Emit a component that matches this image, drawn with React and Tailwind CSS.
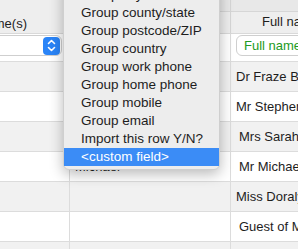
import { useState } from 'react';

const menuItems = [
  'Group city/town',
  'Group county/state',
  'Group postcode/ZIP',
  'Group country',
  'Group work phone',
  'Group home phone',
  'Group mobile',
  'Group email',
  'Import this row Y/N?',
  '<custom field>',
];

const rows = [
  { b: '', c: 'Dr Fraze Bamford', pad: false },
  { b: '', c: 'Mr Stephen Allan', pad: false },
  { b: '', c: 'Mrs Sarah Allan', pad: true },
  { b: 'Michael', c: 'Mr Michael Ames', pad: true },
  { b: '', c: 'Miss Doralynn Bell', pad: false },
  { b: '', c: 'Guest of Mr Bell', pad: true },
  { b: '', c: '', pad: false },
];

function Stepper() {
  return (
    <div className="flex h-[18px] w-[17px] items-center justify-center rounded-[4px] bg-[#2a84f7]">
      <svg width="9" height="13" viewBox="0 0 9 13" fill="none" stroke="white" strokeWidth="1.6" strokeLinecap="round" strokeLinejoin="round">
        <path d="M1.5 4.5 L4.5 1.5 L7.5 4.5" />
        <path d="M1.5 8.5 L4.5 11.5 L7.5 8.5" />
      </svg>
    </div>
  );
}

export default function App() {
  const [selected] = useState('<custom field>');

  return (
    <div className="relative h-[249px] w-[298px] overflow-hidden bg-white font-['Liberation_Sans',Arial,sans-serif] text-[13px] text-[#1d1d1d]">
      {/* Header row */}
      <div className="flex h-[34px] border-b border-[#d9d9d9] bg-[#eeeeee]">
        <div className="relative w-[69px] shrink-0 overflow-hidden">
          <span className="absolute right-[42px] top-[14px] whitespace-nowrap">First name(s)</span>
        </div>
        <div className="flex w-[161px] shrink-0 flex-col">
          <div className="h-[12px] border-b border-[#d6d6d6] bg-[#e8e8e8]" />
        </div>
        <div className="flex w-[120px] shrink-0 flex-col border-l border-[#d6d6d6]">
          <div className="h-[12px] border-b border-[#d6d6d6] bg-[#e8e8e8]" />
          <div className="flex flex-1 items-center justify-center pb-[2px]">Full name</div>
        </div>
      </div>

      {/* Select row */}
      <div className="flex h-[28px] border-b border-[#dcdcdc] bg-white">
        <div className="w-[69px] shrink-0 overflow-hidden pt-[1px]">
          <div className="ml-[-90px] flex h-[21px] w-[152px] items-center justify-between rounded-[6px] border border-[#cfcfcf] bg-white pl-[8px] pr-[1px]">
            <span className="text-[#239b23]">First name</span>
            <Stepper />
          </div>
        </div>
        <div className="w-[161px] shrink-0" />
        <div className="w-[126px] shrink-0 border-l border-[#dcdcdc] pl-[5px] pt-[1px]">
          <div className="flex h-[21px] items-center rounded-[6px] border border-[#cfcfcf] bg-white pl-[7px] text-[#239b23]">
            Full name
          </div>
        </div>
      </div>

      {/* Data rows */}
      {rows.map((row, i) => (
        <div
          key={i}
          className={`flex h-[30px] border-b border-[#dcdcdc] ${i % 2 === 0 ? 'bg-[#f1f1f1]' : 'bg-white'}`}
        >
          <div className="w-[69px] shrink-0" />
          <div className="flex w-[161px] shrink-0 items-center border-l border-[#dcdcdc] pl-[5px]">{row.b}</div>
          <div className={`flex w-[126px] shrink-0 items-center whitespace-nowrap border-l border-[#dcdcdc] ${row.pad ? 'pl-[8px]' : 'pl-[5px]'}`}>
            {row.c}
          </div>
        </div>
      ))}

      {/* Open dropdown menu */}
      <div className="absolute left-[63px] top-[-18px] w-[157px] rounded-[6px] border border-[#cfcfcf] bg-[#ededed] pb-[3px] pt-[3px] text-[13.5px] shadow-[0_4px_14px_rgba(0,0,0,0.28)]">
        {menuItems.map((item) => (
          <div
            key={item}
            className={`flex h-[18px] items-center whitespace-nowrap pl-[17px] ${item === selected ? 'bg-[#3b8cf6] text-white' : 'text-[#1d1d1d]'}`}
          >
            {item}
          </div>
        ))}
      </div>
    </div>
  );
}
